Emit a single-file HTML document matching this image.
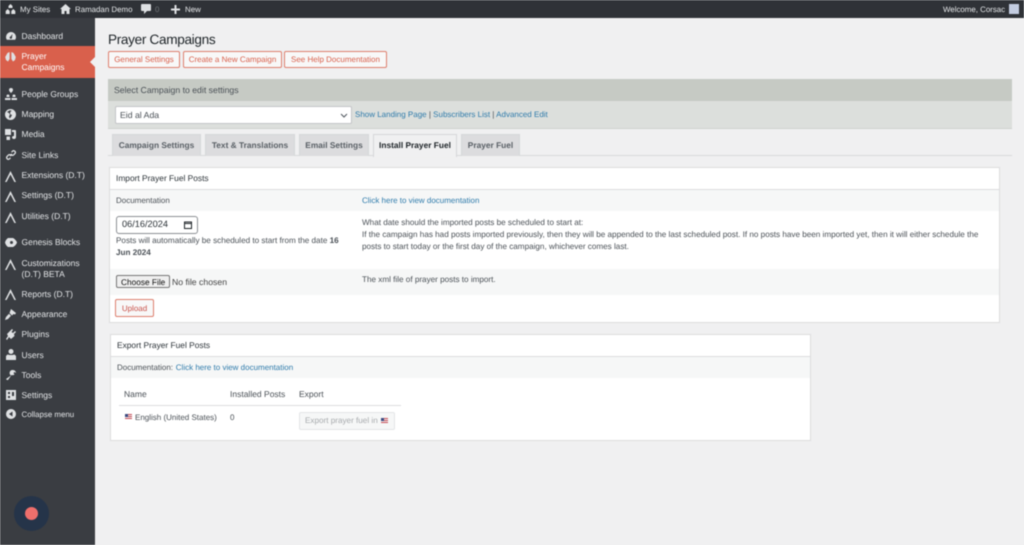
<!DOCTYPE html>
<html><head><meta charset="utf-8"><style>
html,body{margin:0;padding:0;width:1024px;height:545px;overflow:hidden;background:#f0f0f1;font-family:"Liberation Sans",sans-serif;font-size:8.150px;color:#4a5056;text-rendering:geometricPrecision}
#w{position:absolute;left:0;top:0;width:1024px;height:545px;filter:blur(.4px);overflow:hidden}
.a{position:absolute;white-space:nowrap;line-height:11px}
.b{position:absolute;box-sizing:border-box}
.m{color:#e3e5e7;font-size:8.5px;left:21.500px}
.t{color:#e6e8ea;font-size:7.900px;top:4px}
.lnk{color:#2f7bab}
.btn{position:absolute;box-sizing:border-box;top:51px;height:17px;border:1px solid #de7f6e;border-radius:2px;background:#f8f8f8;color:#d9604c;font-size:8px;line-height:15px;text-align:center}
.tab{position:absolute;box-sizing:border-box;top:134px;height:22px;background:#dcdcde;border:1px solid #d6d7d9;border-bottom:0;color:#5a6066;font-weight:bold;font-size:8.350px;line-height:21px;text-align:center}
svg{position:absolute;fill:#dfe1e3}
</style></head><body><div id="w">
<div class="b" style="left:0;top:0;width:1024px;height:18px;background:#2f3237"></div>
<div class="b" style="left:0;top:18px;width:95px;height:527px;background:#3a3d42"></div>
<svg style="left:5px;top:4px" width="11" height="10" viewBox="0 0 11 10"><path d="M5.500 0 7.500 2v2h-4V2zM2.700 5 4.700 7v3H.7V7zM8.300 5l2 2v3h-4V7z"/></svg>
<div class="a t" style="left:20px">My Sites</div>
<svg style="left:60px;top:4px" width="11" height="10" viewBox="0 0 11 10"><path d="M5.500 0 11 5H9.500v5H6.500V7h-2v3H1.500V5H0z"/></svg>
<div class="a t" style="left:75px">Ramadan Demo</div>
<svg style="left:141px;top:4px" width="10" height="10" viewBox="0 0 10 10"><path d="M1 0h8a1 1 0 0 1 1 1v5a1 1 0 0 1-1 1H6L3 10V7H1a1 1 0 0 1-1-1V1a1 1 0 0 1 1-1z"/></svg>
<div class="a t" style="left:155px;color:#6f7377">0</div>
<svg style="left:171px;top:5px" width="9" height="9" viewBox="0 0 9 9"><path d="M3.500 0h2v3.500H9v2H5.500V9h-2V5.500H0v-2h3.500z"/></svg>
<div class="a t" style="left:185px">New</div>
<div class="a t" style="left:943px">Welcome, Corsac</div>
<div class="b" style="left:1009px;top:4px;width:10px;height:10px;background:#c3cce0"></div>

<div class="b" style="left:0;top:46px;width:95px;height:32px;background:#d9604c"></div>
<div class="b" style="left:90px;top:57px;width:0;height:0;border:5px solid transparent;border-left:0;border-right-color:#f0f0f1"></div>

<svg style="left:6px;top:31px" width="10" height="10" viewBox="0 0 10 10"><path fill-rule="evenodd" d="M5 1a5 5 0 0 1 5 5c0 1-.3 2-.8 2.800H.8A5 5 0 0 1 0 6a5 5 0 0 1 5-5zM6.500 3 4.500 5.500a1.200 1.200 0 1 0 1.500.8z"/></svg>
<div class="a m" style="top:31px">Dashboard</div>
<svg style="left:5px;top:51px" width="11" height="11" viewBox="0 0 11 11"><path d="M4.600 1v7L3 10.500 1 9 .2 6 2.500 2zM6.400 1v7L8 10.500 10 9l.8-3-2.300-4z"/></svg>
<div class="a m" style="top:51px;color:#fff">Prayer</div>
<div class="a m" style="top:62px;color:#fff">Campaigns</div>
<svg style="left:5px;top:88px" width="12" height="12" viewBox="0 0 12 12"><path d="M6 0a2 2 0 0 1 2 2c0 1.200-2 3-2 3S4 3.200 4 2a2 2 0 0 1 2-2zM3 6.500a1.500 1.500 0 0 1 1.500 1.500v1h-3V8A1.500 1.500 0 0 1 3 6.500zM9 6.500A1.500 1.500 0 0 1 10.500 8v1h-3V8A1.500 1.500 0 0 1 9 6.500zM0 10h5.500v2H0zM6.500 10H12v2H6.500z"/></svg>
<div class="a m" style="top:89px">People Groups</div>
<svg style="left:5px;top:109px" width="11" height="11" viewBox="0 0 11 11"><path fill-rule="evenodd" d="M5.500 0a5.500 5.500 0 1 1 0 11 5.500 5.500 0 0 1 0-11zM2 3l2 1 1 2-1 1 .5 2.500L6 8l1-2-2-1 .5-2.500L7 2 5 1.200z"/></svg>
<div class="a m" style="top:109px">Mapping</div>
<svg style="left:5px;top:129px" width="11" height="11" viewBox="0 0 11 11"><path d="M0 0h6v6H0zM7 1h3a1 1 0 0 1 1 1v6a2 2 0 0 1-4 0 2 2 0 0 1 2-1V3H7zM1.500 7.500h3.500v3.500H1.500z"/></svg>
<div class="a m" style="top:129px">Media</div>
<svg style="left:6px;top:150px;fill:none" width="10" height="10" viewBox="0 0 10 10"><path fill="none" stroke="#dfe1e3" stroke-width="1.300" d="M4 6l2-2M5.500 2.200l1-1a1.700 1.700 0 0 1 2.400 2.400l-1.300 1.300a1.700 1.700 0 0 1-2.400 0M4.500 7.800l-1 1A1.700 1.700 0 0 1 1.100 6.400l1.300-1.300a1.700 1.700 0 0 1 2.400 0"/></svg>
<div class="a m" style="top:150px">Site Links</div>
<svg style="left:5px;top:171px" width="11" height="11" viewBox="0 0 11 11"><path d="M5.500 0 11 11H9.400L5.500 3.500 1.600 11H0z"/></svg>
<div class="a m" style="top:170px">Extensions (D.T)</div>
<svg style="left:5px;top:191px" width="11" height="11" viewBox="0 0 11 11"><path d="M5.500 0 11 11H9.400L5.500 3.500 1.600 11H0z"/></svg>
<div class="a m" style="top:190px">Settings (D.T)</div>
<svg style="left:5px;top:212px" width="11" height="11" viewBox="0 0 11 11"><path d="M5.500 0 11 11H9.400L5.500 3.500 1.600 11H0z"/></svg>
<div class="a m" style="top:211px">Utilities (D.T)</div>
<svg style="left:5px;top:238px" width="12" height="9" viewBox="0 0 12 9"><path fill-rule="evenodd" d="M3 0h5c2 1 3.500 3 4 4.500C11.500 6 10 8 8 9H3C1.500 8 .5 6.500 0 4.500.5 2.500 1.500 1 3 0zM6.500 3a1.500 1.500 0 1 0 0 3 1.500 1.500 0 0 0 0-3z"/></svg>
<div class="a m" style="top:237px">Genesis Blocks</div>
<svg style="left:5px;top:259px" width="11" height="11" viewBox="0 0 11 11"><path d="M5.500 0 11 11H9.400L5.500 3.500 1.600 11H0z"/></svg>
<div class="a m" style="top:258px">Customizations</div>
<div class="a m" style="top:269px">(D.T) BETA</div>
<svg style="left:5px;top:289px" width="11" height="11" viewBox="0 0 11 11"><path d="M5.500 0 11 11H9.400L5.500 3.500 1.600 11H0z"/></svg>
<div class="a m" style="top:289px">Reports (D.T)</div>
<svg style="left:5px;top:309px" width="11" height="11" viewBox="0 0 11 11"><path d="M6 0l5 4-1 1.500-1.500-.5L7 6.500 4.500 4zM4 4.800l2 2L3 10l-3 1 1-3z"/></svg>
<div class="a m" style="top:309px">Appearance</div>
<svg style="left:6px;top:329px" width="10" height="11" viewBox="0 0 10 11"><path d="M6 0l1 1-1.500 2 1.500 1L9 2l1 1-2 2 .5 2L5 10 3 8l-2 3-1-1 2-3-1-2 3-3z"/></svg>
<div class="a m" style="top:329px">Plugins</div>
<svg style="left:6px;top:349px" width="10" height="11" viewBox="0 0 10 11"><path d="M5 0a2.500 2.500 0 0 1 2.500 2.500A2.500 2.500 0 0 1 5 5a2.500 2.500 0 0 1 0-5zM1.500 5.500 3.500 6h3l2-.5 1.500 1.500V11H0V7z"/></svg>
<div class="a m" style="top:350px">Users</div>
<svg style="left:6px;top:370px" width="10" height="10" viewBox="0 0 10 10"><path d="M7 0a3 3 0 0 1 3 3L8.500 2 7.500 3l1 1.500A3 3 0 0 1 5.500 5L2 10H1L0 9l5-3.500A3 3 0 0 1 7 0z"/></svg>
<div class="a m" style="top:370px">Tools</div>
<svg style="left:6px;top:390px" width="10" height="10" viewBox="0 0 10 10"><path fill-rule="evenodd" d="M0 0h10v10H0zM2 2v2h2V2zM6 2v4h2V2zM2 6v2h2V6z"/></svg>
<div class="a m" style="top:390px">Settings</div>
<svg style="left:6px;top:409px" width="10" height="10" viewBox="0 0 10 10"><path fill-rule="evenodd" d="M5 0a5 5 0 1 1 0 10A5 5 0 0 1 5 0zM6.500 2.500 3 5l3.500 2.500z"/></svg>
<div class="a m" style="top:409px;font-size:7.900px">Collapse menu</div>

<div class="b" style="left:14px;top:496px;width:35px;height:35px;border-radius:50%;background:#253449"></div>
<div class="b" style="left:25px;top:507px;width:13px;height:13px;border-radius:50%;background:#ef6f6c"></div>

<div class="a" style="left:108px;top:31px;font-size:13.600px;letter-spacing:-.33px;line-height:17px;color:#1d2327">Prayer Campaigns</div>
<div class="btn" style="left:108px;width:72px">General Settings</div>
<div class="btn" style="left:183px;width:99px">Create a New Campaign</div>
<div class="btn" style="left:284px;width:103px">See Help Documentation</div>

<div class="b" style="left:108px;top:79px;width:904px;height:22px;background:#c6cac4"></div>
<div class="b" style="left:108px;top:101px;width:904px;height:28px;background:#dcdfdc;border-bottom:1px solid #cfd2cf"></div>
<div class="a" style="left:114px;top:85px;font-size:8.700px">Select Campaign to edit settings</div>
<div class="b" style="left:115px;top:106px;width:237px;height:18px;background:#fff;border:1px solid #c3c4c7;border-radius:2px"></div>
<div class="a" style="left:120px;top:110px;font-size:8.700px">Eid al Ada</div>
<svg style="left:340px;top:113px;fill:none" width="8" height="5" viewBox="0 0 8 5"><path d="M1 1l3 3 3-3" fill="none" stroke="#50575e" stroke-width="1"/></svg>
<div class="a" style="left:355px;top:109px;font-size:8px"><span class="lnk">Show Landing Page</span> | <span class="lnk">Subscribers List</span> | <span class="lnk">Advanced Edit</span></div>

<div class="b" style="left:108px;top:155px;width:904px;height:1px;background:#d8d9db"></div>
<div class="tab" style="left:112px;width:89px">Campaign Settings</div>
<div class="tab" style="left:205px;width:90px">Text &amp; Translations</div>
<div class="tab" style="left:299px;width:70px">Email Settings</div>
<div class="tab" style="left:373px;width:84px;height:23px;background:#f0f0f1;color:#1d2327">Install Prayer Fuel</div>
<div class="tab" style="left:461px;width:59px">Prayer Fuel</div>

<div class="b" style="left:109px;top:167px;width:891px;height:156px;background:#fff;border:1px solid #dcdcde"></div>
<div class="b" style="left:110px;top:189px;width:889px;height:1px;background:#dcdcde"></div>
<div class="b" style="left:110px;top:190px;width:889px;height:21px;background:#f6f7f7"></div>
<div class="b" style="left:110px;top:269px;width:889px;height:26px;background:#f6f7f7"></div>
<div class="a" style="left:116px;top:173px;font-size:8.400px;color:#2c3338">Import Prayer Fuel Posts</div>
<div class="a" style="left:116px;top:195px;font-size:8px">Documentation</div>
<div class="a lnk" style="left:362px;top:195px;font-size:8px">Click here to view documentation</div>

<div class="b" style="left:116px;top:216px;width:82px;height:18px;background:#fff;border:1px solid #8c8f94;border-radius:3px"></div>
<div class="a" style="left:122px;top:219px;font-size:9.200px;color:#2c3338">06/16/2024</div>
<svg style="left:184px;top:221px;fill:none" width="8" height="8" viewBox="0 0 8 8"><path d="M.5 1h7v6.500h-7zM.5 2.500h7" fill="none" stroke="#1d2327" stroke-width="1"/></svg>
<div class="a" style="left:116px;top:235px">Posts will automatically be scheduled to start from the date <b>16</b></div>
<div class="a" style="left:116px;top:247px"><b>Jun 2024</b></div>

<div class="a" style="left:362px;top:217px">What date should the imported posts be scheduled to start at:</div>
<div class="a" style="left:362px;top:229px">If the campaign has had posts imported previously, then they will be appended to the last scheduled post. If no posts have been imported yet, then it will either schedule the</div>
<div class="a" style="left:362px;top:241px">posts to start today or the first day of the campaign, whichever comes last.</div>

<div class="b" style="left:116px;top:275px;width:54px;height:13px;background:#efefef;border:1px solid #767676;border-radius:2px"></div>
<div class="a" style="left:121px;top:276.500px;font-size:8.300px;color:#111">Choose File</div>
<div class="a" style="left:172px;top:276.500px;font-size:8.700px;color:#444">No file chosen</div>
<div class="a" style="left:362px;top:274px">The xml file of prayer posts to import.</div>
<div class="btn" style="left:115px;top:299px;width:39px;height:18px;line-height:17px;color:#c9524a">Upload</div>

<div class="b" style="left:110px;top:334px;width:701px;height:107px;background:#fff;border:1px solid #dcdcde"></div>
<div class="b" style="left:111px;top:356px;width:699px;height:1px;background:#dcdcde"></div>
<div class="b" style="left:111px;top:357px;width:699px;height:21px;background:#f6f7f7"></div>
<div class="a" style="left:117px;top:340px;font-size:8.400px;color:#2c3338">Export Prayer Fuel Posts</div>
<div class="a" style="left:117px;top:362px;font-size:8px">Documentation: <span class="lnk" style="margin-left:.5px">Click here to view documentation</span></div>
<div class="a" style="left:124px;top:389px;font-size:8.500px">Name</div>
<div class="a" style="left:230px;top:389px;font-size:8.500px">Installed Posts</div>
<div class="a" style="left:299px;top:389px;font-size:8.500px">Export</div>
<div class="b" style="left:119px;top:405px;width:282px;height:1px;background:#dcdcde"></div>
<div class="b" style="left:125px;top:414px;width:7px;height:5px;background:linear-gradient(#c9505a 0 20%,#eee 20% 40%,#c9505a 40% 60%,#eee 60% 80%,#c9505a 80%)"></div>
<div class="b" style="left:125px;top:414px;width:3px;height:3px;background:#3c4a80"></div>
<div class="a" style="left:135px;top:412px;font-size:8px">English (United States)</div>
<div class="a" style="left:230px;top:412px;font-size:8px">0</div>
<div class="b" style="left:299px;top:412px;width:96px;height:18px;background:#f6f7f7;border:1px solid #e4e5e7;border-radius:2px"></div>
<div class="a" style="left:305px;top:415px;font-size:8.150px;color:#a7aaad">Export prayer fuel in</div>
<div class="b" style="left:381px;top:418px;width:7px;height:5px;background:linear-gradient(#c9505a 0 20%,#eee 20% 40%,#c9505a 40% 60%,#eee 60% 80%,#c9505a 80%)"></div>
<div class="b" style="left:381px;top:418px;width:3px;height:3px;background:#3c4a80"></div>
</div></body></html>
